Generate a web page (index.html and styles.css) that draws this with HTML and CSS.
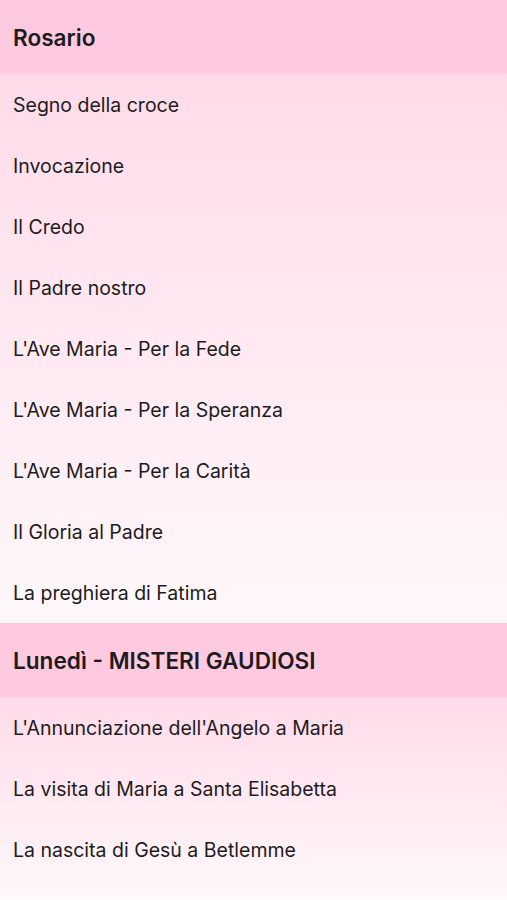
FILE: index.html
```html
<!DOCTYPE html>
<html>
<head>
<title>Rosario</title>
<link rel="stylesheet" href="styles.css">
</head>
<body>
<div class="section">
  <div class="section-header">Rosario</div>
  <ul class="list">
    <li>Segno della croce</li>
    <li>Invocazione</li>
    <li>Il Credo</li>
    <li>Il Padre nostro</li>
    <li>L'Ave Maria - Per la Fede</li>
    <li>L'Ave Maria - Per la Speranza</li>
    <li>L'Ave Maria - Per la Carità</li>
    <li>Il Gloria al Padre</li>
    <li>La preghiera di Fatima</li>
  </ul>
</div>

<div class="section">
  <div class="section-header">Lunedì - MISTERI GAUDIOSI</div>
  <ul class="list list-short">
    <li>L'Annunciazione dell'Angelo a Maria</li>
    <li>La visita di Maria a Santa Elisabetta</li>
    <li>La nascita di Gesù a Betlemme</li>
  </ul>
</div>
</body>
</html>
```

FILE: styles.css
```css
body {
  margin: 0;
  font-family: Inter, "Noto Sans", sans-serif;
  color: #1c1c1e;
  background-color: #fff;
}

.section-header {
  height: 74px;
  display: flex;
  align-items: center;
  padding: 0 13px;
  background-color: #ffcae0;
  font-size: 22.6px;
  font-weight: 600;
}

.list {
  list-style: none;
  margin: 0;
  padding: 0;
  background: linear-gradient(#ffdbe9, #fff8fb);
}

.list-short {
  padding-bottom: 20px;
  background: linear-gradient(#ffdbe9, #fff7fa 95%, #fffafc);
}

.list li {
  height: 61px;
  display: flex;
  align-items: center;
  padding: 0 13px;
  font-size: 19.5px;
}
```
